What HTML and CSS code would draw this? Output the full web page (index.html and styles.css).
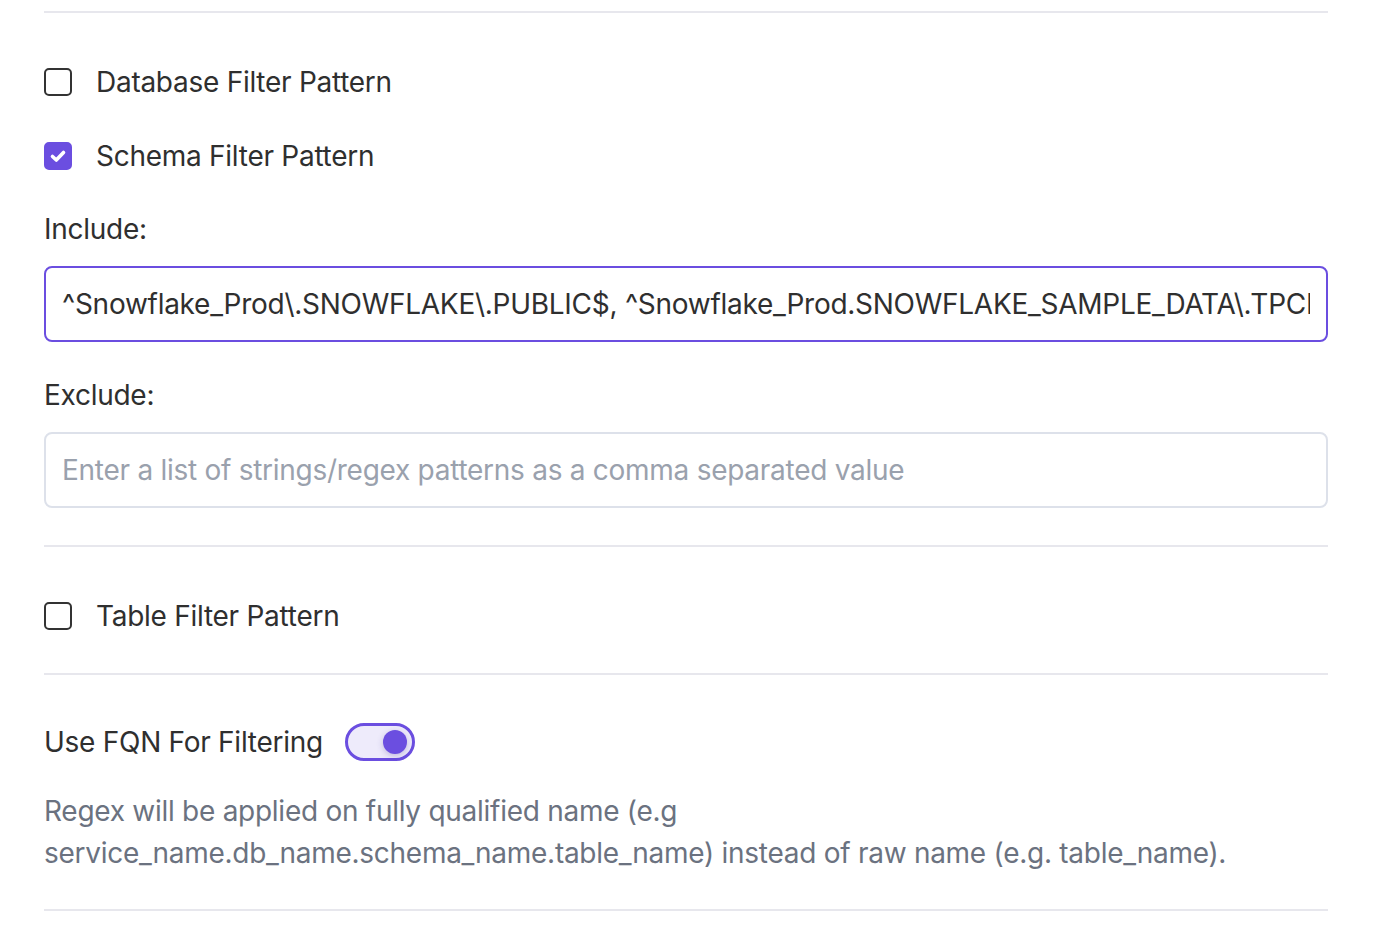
FILE: index.html
```html
<!DOCTYPE html>
<html lang="en">
<head>
<meta charset="utf-8">
<title>Filter Patterns</title>
<link rel="stylesheet" href="styles.css">
</head>
<body>
<div class="page">
  <section class="section first">
    <label class="check-row row-db">
      <span class="checkbox"></span>
      <span class="check-label">Database Filter Pattern</span>
    </label>
    <label class="check-row row-schema">
      <span class="checkbox checked">
        <svg viewBox="0 0 28 28" width="28" height="28"><path d="M8.5 14.5 L12.3 18 L19.5 10.5" fill="none" stroke="#fff" stroke-width="3.6" stroke-linecap="round" stroke-linejoin="round"/></svg>
      </span>
      <span class="check-label">Schema Filter Pattern</span>
    </label>
    <div class="field field-include">
      <div class="field-label">Include:</div>
      <input class="text-input focused" type="text" value="^Snowflake_Prod\.SNOWFLAKE\.PUBLIC$, ^Snowflake_Prod.SNOWFLAKE_SAMPLE_DATA\.TPCH_SF1$">
    </div>
    <div class="field field-exclude">
      <div class="field-label">Exclude:</div>
      <input class="text-input" type="text" placeholder="Enter a list of strings/regex patterns as a comma separated value">
    </div>
  </section>
  <section class="section">
    <label class="check-row row-table">
      <span class="checkbox"></span>
      <span class="check-label">Table Filter Pattern</span>
    </label>
  </section>
  <section class="section">
    <div class="toggle-row">
      <span class="toggle-label">Use FQN For Filtering</span>
      <span class="toggle on"><span class="knob"></span></span>
    </div>
    <p class="description">Regex will be applied on fully qualified name (e.g<br>service_name.db_name.schema_name.table_name) instead of raw name (e.g. table_name).</p>
  </section>
  <div class="end-divider"></div>
</div>
</body>
</html>
```

FILE: styles.css
```css
* { box-sizing: border-box; }
html, body {
  margin: 0;
  padding: 0;
  background: #ffffff;
}
body {
  font-family: Inter, "Noto Sans", "Liberation Sans", sans-serif;
  font-size: 28px;
  line-height: 42px;
  letter-spacing: -0.27px;
  color: #2f2f2f;
}
.page {
  width: 1284px;
  margin: 0 0 0 44px;
  padding-top: 11px;
}
.section {
  border-top: 2px solid #e7e7ed;
  display: flex;
  flex-direction: column;
}
.check-row {
  display: flex;
  align-items: center;
  gap: 24px;
  height: 42px;
  cursor: pointer;
}
.row-db { margin-top: 48px; }
.row-schema { margin-top: 32px; }
.row-table { margin-top: 48px; margin-bottom: 36px; }
.checkbox {
  width: 28px;
  height: 28px;
  border: 2.5px solid #333333;
  border-radius: 5px;
  display: flex;
  align-items: center;
  justify-content: center;
  flex: none;
}
.checkbox.checked {
  background: #6b4ee0;
  border-color: #6b4ee0;
}
.checkbox svg { display: block; margin: -2.5px; }
.field { display: flex; flex-direction: column; }
.field-include { margin-top: 31px; }
.field-exclude { margin-top: 32px; margin-bottom: 37px; }
.field-label { height: 42px; margin-bottom: 16px; }
.text-input {
  width: 100%;
  height: 76px;
  border: 2px solid #dde1ea;
  border-radius: 8px;
  padding: 0 16px;
  font-family: inherit;
  font-size: 28px;
  letter-spacing: -0.27px;
  color: #2f2f2f;
  background: #fff;
  outline: none;
}
.text-input.focused { border-color: #6b4ee0; }
.text-input::placeholder { color: #9aa1ad; }
.toggle-row {
  display: flex;
  align-items: center;
  height: 42px;
  margin-top: 46px;
}
.toggle-label { margin-right: 22px; }
.toggle {
  width: 70px;
  height: 38px;
  border: 3px solid #6b4ee0;
  border-radius: 19px;
  background: #eeebfb;
  position: relative;
  flex: none;
}
.knob {
  position: absolute;
  right: 5px;
  top: 4px;
  width: 24px;
  height: 24px;
  border-radius: 50%;
  background: #6b4ee0;
  box-shadow: 0 2px 6px rgba(60, 40, 140, 0.25);
}
.description {
  margin: 27px 0 35px 0;
  color: #6b7280;
  line-height: 42px;
}
.end-divider { border-top: 2px solid #e7e7ed; }
```
